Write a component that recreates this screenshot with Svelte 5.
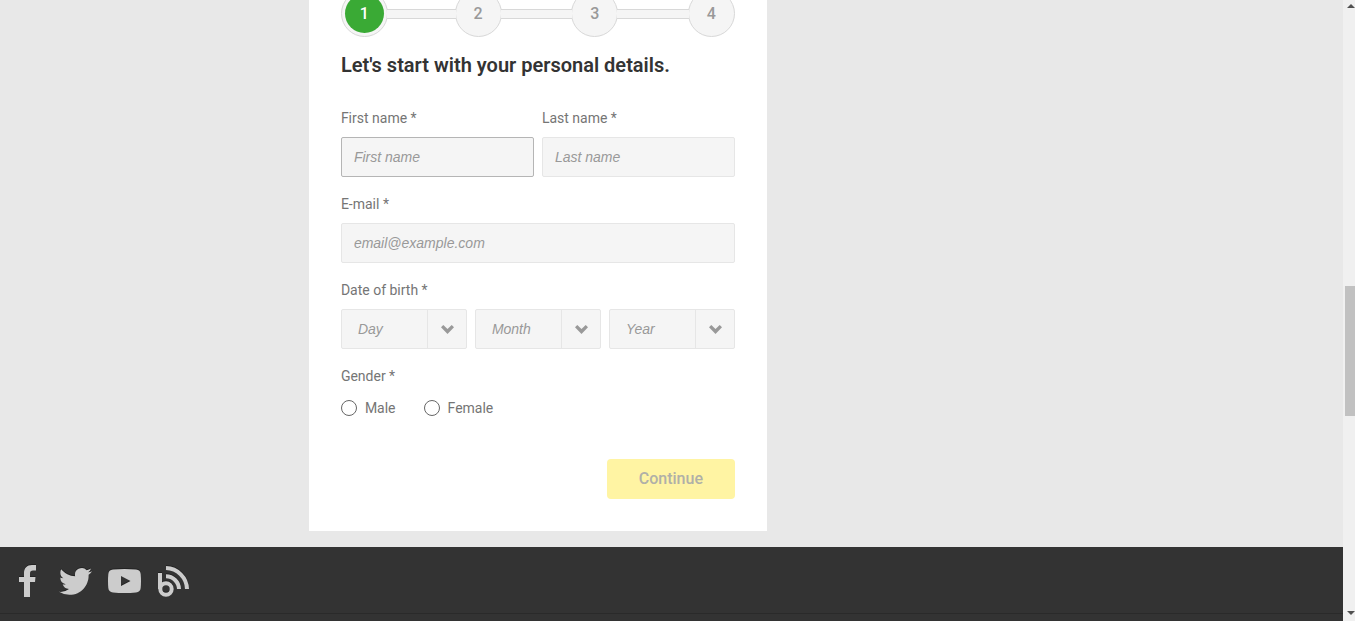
<script>
  let firstName = $state('');
  let lastName = $state('');
  let email = $state('');
  let gender = $state('');
  let birth = $state({ day: '', month: '', year: '' });

  const steps = [1, 2, 3, 4];
  const current = 1;

  const range = (from, count) => Array.from({ length: count }, (_, i) => from + i);

  const birthFields = [
    { key: 'day', label: 'Day', options: range(1, 31) },
    { key: 'month', label: 'Month', options: range(1, 12) },
    { key: 'year', label: 'Year', options: range(1930, 76) }
  ];

  const genders = ['Male', 'Female'];
</script>

<div class="page">
  <main>
    <form class="card">
      <ol class="steps">
        {#each steps as step}
          <li>
            <span class="circle" class:active={step === current}><span>{step}</span></span>
          </li>
        {/each}
      </ol>

      <h2>Let's start with your personal details.</h2>

      <div class="fields">
        <div class="row">
          <div class="field">
            <label for="first-name">First name *</label>
            <input class="text focused" id="first-name" type="text" placeholder="First name" bind:value={firstName} />
          </div>
          <div class="field">
            <label for="last-name">Last name *</label>
            <input class="text" id="last-name" type="text" placeholder="Last name" bind:value={lastName} />
          </div>
        </div>

        <div class="field">
          <label for="email">E-mail *</label>
          <input class="text" id="email" type="email" placeholder="email@example.com" bind:value={email} />
        </div>

        <div class="field">
          <label for="birth-day">Date of birth *</label>
          <div class="row">
            {#each birthFields as f}
              <div class="select">
                <select id="birth-{f.key}" aria-label={f.label} bind:value={birth[f.key]}>
                  <option value="">{f.label}</option>
                  {#each f.options as o}
                    <option value={o}>{o}</option>
                  {/each}
                </select>
                <span class="arrow">
                  <svg width="13" height="9" viewBox="0 0 13 9"><path d="M2.3 0 6.5 4 10.7 0 13 2.3 6.5 9 0 2.3z" /></svg>
                </span>
              </div>
            {/each}
          </div>
        </div>

        <fieldset>
          <legend>Gender *</legend>
          <div class="radios">
            {#each genders as g}
              <label><input type="radio" name="gender" value={g} bind:group={gender} />{g}</label>
            {/each}
          </div>
        </fieldset>
      </div>

      <button class="continue" type="submit" disabled>Continue</button>
    </form>
  </main>

  <footer>
    <nav class="social">
      <a href="#facebook" aria-label="Facebook">
        <svg width="19" height="32" viewBox="-2 0 19 32"><path d="M5 32V17H0v-5h5V8c0-5 3-8 8-8h4v5.500h-3c-2 0-3 .8-3 3V12h5.500l-.5 5H11v15z" /></svg>
      </a>
      <a href="#twitter" aria-label="Twitter">
        <svg width="33" height="33" viewBox="0 -.7 24 24"><path d="M23.953 4.57a10 10 0 01-2.825.775 4.958 4.958 0 002.163-2.723c-.951.555-2.005.959-3.127 1.184a4.92 4.92 0 00-8.384 4.482C7.69 8.095 4.067 6.13 1.64 3.162a4.822 4.822 0 00-.666 2.475c0 1.71.87 3.213 2.188 4.096a4.904 4.904 0 01-2.228-.616v.06a4.923 4.923 0 003.946 4.827 4.996 4.996 0 01-2.212.085 4.936 4.936 0 004.604 3.417 9.867 9.867 0 01-6.102 2.105c-.39 0-.779-.023-1.17-.067a13.995 13.995 0 007.557 2.209c9.053 0 13.998-7.496 13.998-13.985 0-.21 0-.42-.015-.63A9.935 9.935 0 0024 4.59z" /></svg>
      </a>
      <a href="#youtube" aria-label="YouTube">
        <svg width="33" height="24" viewBox="0 0 33 24"><path fill-rule="evenodd" d="M5 .6Q16.500-.6 28 .6 32.400 1 32.700 5q.6 7 0 14-.3 4-4.700 4.400-11.500 1.200-23 0Q.6 23 .3 19q-.6-7 0-14Q.6 1 5 .6zM13 7v10l9.500-5z" /></svg>
      </a>
      <a href="#blog" aria-label="Blog">
        <svg width="33" height="33" viewBox="0 -1 33 33">
          <path d="M1 8h4v16H1z" />
          <g class="lines">
            <circle cx="9" cy="24" r="5.700" />
            <path d="M9 11.300A13 13 0 0 1 22 24M9 3A21.500 21.500 0 0 1 30 24" />
          </g>
        </svg>
      </a>
    </nav>
    <div class="legal"></div>
  </footer>
</div>

<div class="scrollbar" aria-hidden="true">
  <svg width="8" height="4" viewBox="0 0 8 4"><path d="M4 0 8 4H0z" /></svg>
  <span class="thumb"></span>
  <svg width="8" height="4" viewBox="0 0 8 4"><path d="M0 0h8L4 4z" /></svg>
</div>

<style>
  :global(body) {
    background: #e8e8e8;
    color: #757575;
    font: 14px/22px Roboto, "Liberation Sans", sans-serif;
    overflow: hidden;
  }

  .page {
    margin-right: 12px;
    overflow: hidden;
  }

  main {
    display: flex;
    padding: 0 23% 16px;
  }

  .card {
    box-sizing: border-box;
    flex: 0 1 458px;
    display: flex;
    flex-direction: column;
    padding: 0 32px 32px;
    background: #fff;
  }

  /* STEPS */
  .steps {
    display: grid;
    grid-template-columns: 114fr 117fr 117fr 47px;
    margin: -10px 0 14px;
    padding: 0;
    list-style: none;
  }

  .steps li {
    display: flex;
    align-items: center;
  }

  .steps li:not(:last-child)::after {
    content: "";
    position: relative;
    z-index: 1;
    flex: 1;
    height: 8px;
    margin: 0 -1px;
    border: solid #d8d8d8;
    border-width: 1px 0;
    background: #f5f5f5;
  }

  .circle {
    box-sizing: border-box;
    display: flex;
    width: 47px;
    height: 47px;
    padding: 3px;
    border: 1px solid #d8d8d8;
    border-radius: 50%;
    background: #f5f5f5;
    color: #999;
    font-size: 16px;
    font-weight: 500;
  }

  .circle span {
    flex: 1;
    border-radius: 50%;
    line-height: 39px;
    text-align: center;
  }

  .active span {
    background: #3aaa35;
    color: #fff;
  }

  h2 {
    margin: 0 0 28px;
    color: #333;
    font-size: 20px;
    font-weight: 600;
    line-height: 28px;
  }

  /* FIELDS */
  .fields {
    display: flex;
    flex-direction: column;
    gap: 16px;
  }

  .row {
    display: flex;
    gap: 8px;
  }

  .field {
    flex: 1;
    min-width: 0;
  }

  .field > label,
  legend {
    display: block;
    margin-bottom: 8px;
    padding: 0;
  }

  .text,
  select {
    box-sizing: border-box;
    display: block;
    width: 100%;
    height: 40px;
    margin: 0;
    padding: 0 12px;
    border: 1px solid #e6e6e6;
    border-radius: 2px;
    background: #f5f5f5;
    color: #999;
    font: italic 14px "Liberation Sans", Arial, sans-serif;
  }

  .text::placeholder {
    color: #999;
    opacity: 1;
  }

  .focused {
    border-color: #b5b5b5;
  }

  .select {
    position: relative;
    flex: 1;
  }

  select {
    appearance: none;
    padding: 0 40px 0 16px;
  }

  .arrow {
    position: absolute;
    top: 1px;
    right: 0;
    bottom: 1px;
    width: 39px;
    display: flex;
    align-items: center;
    justify-content: center;
    border-left: 1px solid #e6e6e6;
    pointer-events: none;
  }

  .arrow svg {
    fill: #999;
  }

  fieldset {
    margin: 0;
    padding: 0;
    border: 0;
  }

  .radios {
    display: flex;
    gap: 28px;
    padding-top: 2px;
  }

  .radios label {
    display: flex;
    align-items: center;
    gap: 8px;
  }

  .radios input {
    appearance: none;
    box-sizing: border-box;
    width: 16px;
    height: 16px;
    margin: 0;
    border: 1px solid #666;
    border-radius: 50%;
    background: #fff;
  }

  .radios input:checked {
    background: #3aaa35;
  }

  .continue {
    align-self: flex-end;
    width: 128px;
    height: 40px;
    margin-top: 40px;
    padding: 0 0 2px;
    border: 0;
    border-radius: 4px;
    background: #fff4a3;
    color: #b0b0a8;
    font: 500 16px Roboto, sans-serif;
  }

  /* FOOTER */
  footer {
    background: #333;
  }

  .social {
    display: flex;
    gap: 16px;
    padding: 17px 10px 16px;
  }

  .social a {
    display: flex;
    align-items: center;
    justify-content: center;
    width: 33px;
    height: 33px;
  }

  .social svg {
    fill: #ccc;
    filter: drop-shadow(0 -1px 0 #222);
    overflow: visible;
  }

  .social .lines {
    fill: none;
    stroke: #ccc;
    stroke-width: 4;
  }

  .legal {
    height: 8px;
    border-top: 1px solid #2a2a2a;
  }

  /* SCROLLBAR */
  .scrollbar {
    position: fixed;
    top: 0;
    right: 0;
    bottom: 0;
    box-sizing: border-box;
    width: 12px;
    display: flex;
    flex-direction: column;
    align-items: flex-end;
    justify-content: space-between;
    padding: 4px 0 6px;
    background: #f0f0f0;
  }

  .scrollbar svg {
    fill: #505050;
  }

  .thumb {
    position: absolute;
    top: 46%;
    right: 0;
    width: 10px;
    height: 21%;
    background: #c1c1c1;
  }
</style>
